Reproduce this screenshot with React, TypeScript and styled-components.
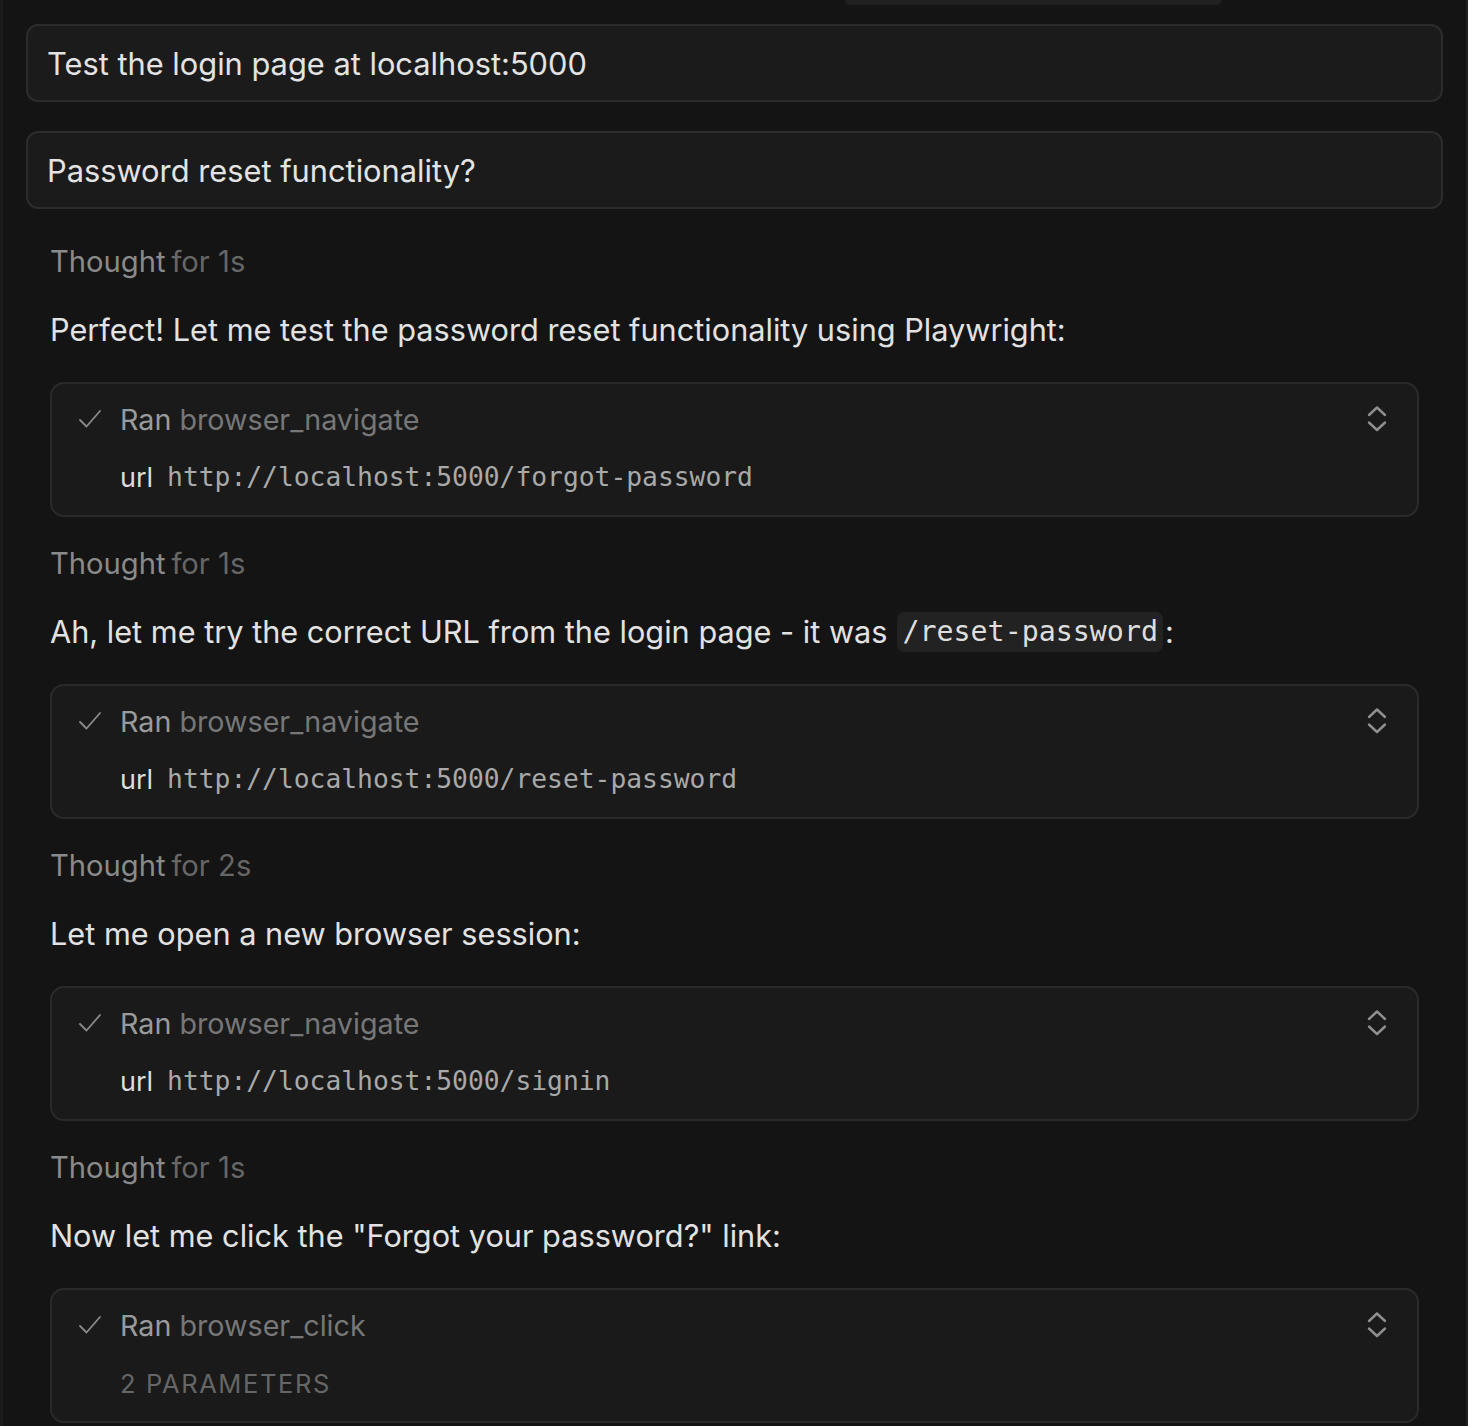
import type { ReactNode } from 'react'
import styled, { createGlobalStyle } from 'styled-components'

type ToolCall = {
  tool: string
  url?: string
  params?: number
}

type Step = {
  seconds: number
  text: ReactNode
  call: ToolCall
}

export default function App() {
  const steps = getSteps()

  return (
    <>
      <GlobalStyle />
      <Page>
        <TopTab />
        <UserMessage>Test the login page at localhost:5000</UserMessage>
        <UserMessage>Password reset functionality?</UserMessage>
        {steps.map((step, i) => (
          <StepBlock key={i}>
            <Thought>
              Thought <span>for {step.seconds}s</span>
            </Thought>
            <Paragraph>{step.text}</Paragraph>
            <ToolCard>
              <ToolHeader>
                <CheckIcon />
                <ToolTitle>
                  Ran <span>{step.call.tool}</span>
                </ToolTitle>
                <ChevronsIcon />
              </ToolHeader>
              {step.call.url ? (
                <ParamRow>
                  <ParamKey>url</ParamKey>
                  <ParamValue>{step.call.url}</ParamValue>
                </ParamRow>
              ) : (
                <ParamCount>{step.call.params} Parameters</ParamCount>
              )}
            </ToolCard>
          </StepBlock>
        ))}
      </Page>
    </>
  )
}

function getSteps(): Step[] {
  return [
    {
      seconds: 1,
      text: 'Perfect! Let me test the password reset functionality using Playwright:',
      call: { tool: 'browser_navigate', url: 'http://localhost:5000/forgot-password' },
    },
    {
      seconds: 1,
      text: (
        <>
          Ah, let me try the correct URL from the login page - it was<Code>/reset-password</Code>:
        </>
      ),
      call: { tool: 'browser_navigate', url: 'http://localhost:5000/reset-password' },
    },
    {
      seconds: 2,
      text: 'Let me open a new browser session:',
      call: { tool: 'browser_navigate', url: 'http://localhost:5000/signin' },
    },
    {
      seconds: 1,
      text: 'Now let me click the "Forgot your password?" link:',
      call: { tool: 'browser_click', params: 2 },
    },
  ]
}

function CheckIcon() {
  return (
    <IconSlot>
      <svg width="24" height="24" viewBox="0 0 24 24" fill="none">
        <path d="M2 13 L8.5 19.5 L22 4" stroke="#8a8a8a" strokeWidth="1.8" strokeLinecap="round" strokeLinejoin="round" />
      </svg>
    </IconSlot>
  )
}

function ChevronsIcon() {
  return (
    <ChevronSlot>
      <svg width="22" height="28" viewBox="0 0 22 28" fill="none">
        <path d="M3 10 L11 2.5 L19 10" stroke="#8f8f8f" strokeWidth="2.4" strokeLinecap="round" strokeLinejoin="round" />
        <path d="M3 17.5 L11 25 L19 17.5" stroke="#8f8f8f" strokeWidth="2.4" strokeLinecap="round" strokeLinejoin="round" />
      </svg>
    </ChevronSlot>
  )
}

const GlobalStyle = createGlobalStyle`
  html, body {
    margin: 0;
    padding: 0;
    background: #141414;
  }
  body {
    font-family: Inter, "Noto Sans", sans-serif;
    -webkit-font-smoothing: antialiased;
  }
`

const Page = styled.div`
  width: 1468px;
  height: 1426px;
  box-sizing: border-box;
  overflow: hidden;
  background: #141414;
  border-left: 3px solid #1c1c1c;
  border-right: 2px solid #222222;
  padding: 0 23px 0 23px;
  display: flex;
  flex-direction: column;
`

const TopTab = styled.div`
  flex: none;
  width: 377px;
  height: 5px;
  margin-left: 819px;
  background: #212121;
  border-radius: 0 0 10px 10px;
`

const UserMessage = styled.div`
  flex: none;
  box-sizing: border-box;
  height: 78px;
  margin-top: 19px;
  padding: 0 19px;
  display: flex;
  align-items: center;
  background: #1b1b1b;
  border: 2px solid #2c2c2c;
  border-radius: 12px;
  color: #e3e3e3;
  font-size: 30.8px;

  & + & {
    margin-top: 29px;
  }
`

const StepBlock = styled.div`
  flex: none;
  padding: 0 24px;
  display: flex;
  flex-direction: column;

  ${UserMessage} + & {
    margin-top: 6px;
  }
`

const Thought = styled.div`
  height: 40px;
  display: flex;
  align-items: center;
  margin-top: 26px;
  color: #8a8a8a;
  font-size: 29.2px;

  span {
    color: #666666;
    margin-left: 0.2em;
  }
`

const Paragraph = styled.div`
  height: 44px;
  margin-top: 26px;
  display: flex;
  align-items: center;
  white-space: pre;
  color: #e2e2e2;
  font-size: 30.7px;
`

const Code = styled.code`
  display: inline-block;
  margin: 2px 2px 0 10px;
  padding: 2px 5px;
  line-height: 36px;
  background: #222222;
  border-radius: 7px;
  color: #dedede;
  font-family: "DejaVu Sans Mono", "Liberation Mono", monospace;
  font-size: 28.3px;
`

const ToolCard = styled.div`
  box-sizing: border-box;
  height: 135px;
  margin-top: 31px;
  padding: 17px 29px 0 26px;
  background: #1a1a1a;
  border: 2px solid #2a2a2a;
  border-radius: 14px;
  display: flex;
  flex-direction: column;
`

const ToolHeader = styled.div`
  height: 36px;
  display: flex;
  align-items: center;
`

const IconSlot = styled.span`
  width: 42px;
  display: flex;
  align-items: center;
`

const ChevronSlot = styled.span`
  margin-left: auto;
  display: flex;
  align-items: center;
`

const ToolTitle = styled.div`
  color: #9a9a9a;
  font-size: 28.7px;

  span {
    color: #777777;
  }
`

const ParamRow = styled.div`
  margin-top: 22px;
  margin-left: 42px;
  height: 36px;
  display: flex;
  align-items: center;
  gap: 14px;
`

const ParamKey = styled.span`
  color: #dedede;
  font-size: 27px;
`

const ParamValue = styled.span`
  color: #a9a9a9;
  font-family: "DejaVu Sans Mono", "Liberation Mono", monospace;
  font-size: 26.3px;
`

const ParamCount = styled.div`
  margin-top: 22px;
  margin-left: 42px;
  height: 36px;
  display: flex;
  align-items: center;
  color: #666666;
  font-size: 25.5px;
  letter-spacing: 1.6px;
  text-transform: uppercase;
`
